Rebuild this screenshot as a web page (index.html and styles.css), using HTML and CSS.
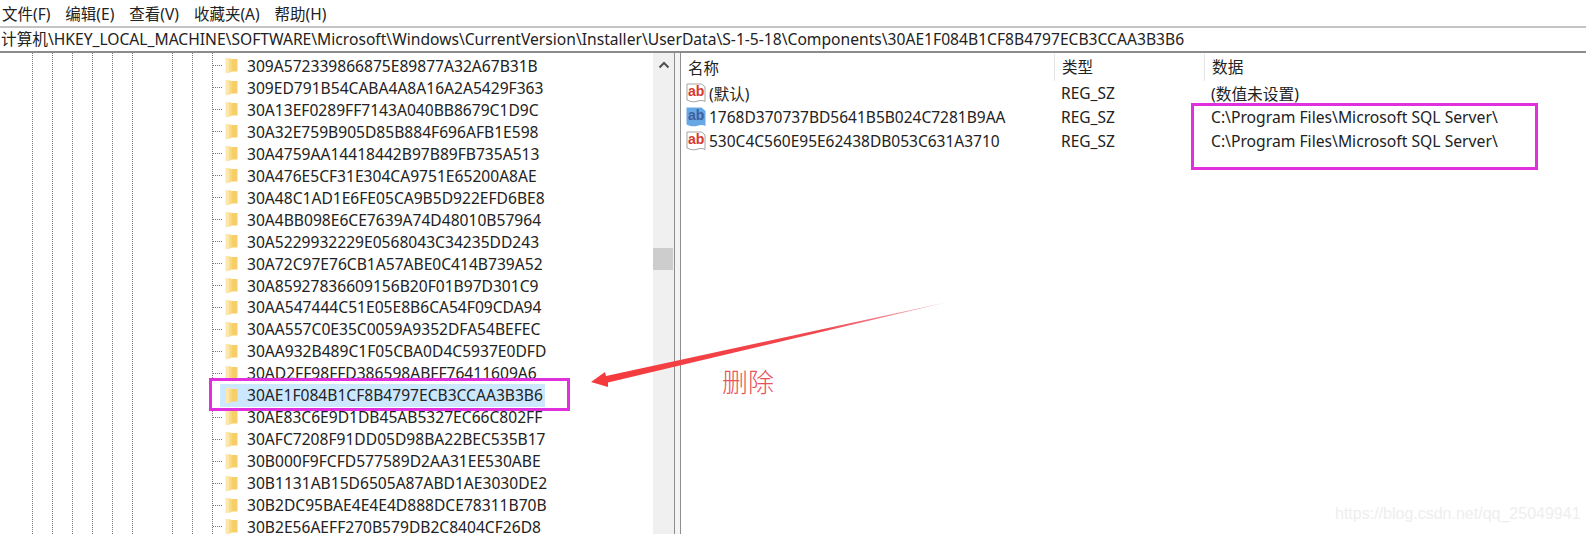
FILE: index.html
```html
<!DOCTYPE html>
<html lang="zh-CN">
<head>
  <meta charset="UTF-8" />
  <title>注册表编辑器</title>
  <link rel="stylesheet" href="styles.css">
</head>
<body>
  <!-- Icons -->
  <svg class="defs" width="0" height="0">
    <symbol id="folder" viewBox="0 0 13 17">
      <path d="M0.500 1h5.500v14l-4 1.500-1.500-1z" fill="#fce8ac"/>
      <path d="M6 2h6.500v12.500H6z" fill="#f7cf68"/>
      <path d="M4 2h2.500v13L4 15.500z" fill="#fadb84"/>
    </symbol>
    <symbol id="page-red" viewBox="0 0 20 20">
      <path d="M1 1h14.500l3.500 3v14.500c-3-1.500-5-1.200-8-.2s-6 .7-10-1.300z" fill="#fff" stroke="#a4a4a4"/>
    </symbol>
    <symbol id="page-blue" viewBox="0 0 20 20">
      <path d="M.5.500h15l4 3.500v15c-3-1.500-5-1.200-8-.2s-7 .7-11-1.300z" fill="#66a8e6"/>
    </symbol>
  </svg>

  <!-- Menu -->
  <nav class="menubar">
    <span>文件(F)</span>
    <span>编辑(E)</span>
    <span>查看(V)</span>
    <span>收藏夹(A)</span>
    <span>帮助(H)</span>
  </nav>

  <!-- Address -->
  <div class="address">计算机\HKEY_LOCAL_MACHINE\SOFTWARE\Microsoft\Windows\CurrentVersion\Installer\UserData\S-1-5-18\Components\30AE1F084B1CF8B4797ECB3CCAA3B3B6</div>

  <div class="panes">
    <!-- Tree -->
    <div class="tree">
      <div class="row"><i class="dash"></i><svg class="folder"><use href="#folder"/></svg><span class="key">309A572339866875E89877A32A67B31B</span></div>
      <div class="row"><i class="dash"></i><svg class="folder"><use href="#folder"/></svg><span class="key">309ED791B54CABA4A8A16A2A5429F363</span></div>
      <div class="row"><i class="dash"></i><svg class="folder"><use href="#folder"/></svg><span class="key">30A13EF0289FF7143A040BB8679C1D9C</span></div>
      <div class="row"><i class="dash"></i><svg class="folder"><use href="#folder"/></svg><span class="key">30A32E759B905D85B884F696AFB1E598</span></div>
      <div class="row"><i class="dash"></i><svg class="folder"><use href="#folder"/></svg><span class="key">30A4759AA14418442B97B89FB735A513</span></div>
      <div class="row"><i class="dash"></i><svg class="folder"><use href="#folder"/></svg><span class="key">30A476E5CF31E304CA9751E65200A8AE</span></div>
      <div class="row"><i class="dash"></i><svg class="folder"><use href="#folder"/></svg><span class="key">30A48C1AD1E6FE05CA9B5D922EFD6BE8</span></div>
      <div class="row"><i class="dash"></i><svg class="folder"><use href="#folder"/></svg><span class="key">30A4BB098E6CE7639A74D48010B57964</span></div>
      <div class="row"><i class="dash"></i><svg class="folder"><use href="#folder"/></svg><span class="key">30A5229932229E0568043C34235DD243</span></div>
      <div class="row"><i class="dash"></i><svg class="folder"><use href="#folder"/></svg><span class="key">30A72C97E76CB1A57ABE0C414B739A52</span></div>
      <div class="row"><i class="dash"></i><svg class="folder"><use href="#folder"/></svg><span class="key">30A85927836609156B20F01B97D301C9</span></div>
      <div class="row"><i class="dash"></i><svg class="folder"><use href="#folder"/></svg><span class="key">30AA547444C51E05E8B6CA54F09CDA94</span></div>
      <div class="row"><i class="dash"></i><svg class="folder"><use href="#folder"/></svg><span class="key">30AA557C0E35C0059A9352DFA54BEFEC</span></div>
      <div class="row"><i class="dash"></i><svg class="folder"><use href="#folder"/></svg><span class="key">30AA932B489C1F05CBA0D4C5937E0DFD</span></div>
      <div class="row"><i class="dash"></i><svg class="folder"><use href="#folder"/></svg><span class="key">30AD2FF98FFD386598ABFF76411609A6</span></div>
      <div class="row selected"><i class="dash"></i><div class="sel"><svg class="folder"><use href="#folder"/></svg><span class="key">30AE1F084B1CF8B4797ECB3CCAA3B3B6</span></div></div>
      <div class="row"><i class="dash"></i><svg class="folder"><use href="#folder"/></svg><span class="key">30AE83C6E9D1DB45AB5327EC66C802FF</span></div>
      <div class="row"><i class="dash"></i><svg class="folder"><use href="#folder"/></svg><span class="key">30AFC7208F91DD05D98BA22BEC535B17</span></div>
      <div class="row"><i class="dash"></i><svg class="folder"><use href="#folder"/></svg><span class="key">30B000F9FCFD577589D2AA31EE530ABE</span></div>
      <div class="row"><i class="dash"></i><svg class="folder"><use href="#folder"/></svg><span class="key">30B1131AB15D6505A87ABD1AE3030DE2</span></div>
      <div class="row"><i class="dash"></i><svg class="folder"><use href="#folder"/></svg><span class="key">30B2DC95BAE4E4E4D888DCE78311B70B</span></div>
      <div class="row"><i class="dash"></i><svg class="folder"><use href="#folder"/></svg><span class="key">30B2E56AEFF270B579DB2C8404CF26D8</span></div>
    </div>

    <!-- Scrollbar -->
    <div class="scrollbar">
      <svg class="chevron" width="12" height="8" viewBox="0 0 12 8"><path d="M1.500 6.500L6 2l4.500 4.500" fill="none" stroke="#505050" stroke-width="2"/></svg>
      <div class="thumb"></div>
    </div>
    <div class="splitter"></div>

    <!-- Values -->
    <div class="values">
      <div class="head">
        <div class="col-name">名称</div>
        <div class="col-type">类型</div>
        <div class="col-data">数据</div>
      </div>
      <div class="value">
        <div class="col-name"><svg class="ab" viewBox="0 0 20 20"><use href="#page-red"/><text x="2" y="13" class="ab-text ab-red">ab</text></svg>(默认)</div>
        <div class="col-type">REG_SZ</div>
        <div class="col-data">(数值未设置)</div>
      </div>
      <div class="value">
        <div class="col-name"><svg class="ab" viewBox="0 0 20 20"><use href="#page-blue"/><text x="2" y="13" class="ab-text ab-blue">ab</text></svg>1768D370737BD5641B5B024C7281B9AA</div>
        <div class="col-type">REG_SZ</div>
        <div class="col-data">C:\Program Files\Microsoft SQL Server\</div>
      </div>
      <div class="value">
        <div class="col-name"><svg class="ab" viewBox="0 0 20 20"><use href="#page-red"/><text x="2" y="13" class="ab-text ab-red">ab</text></svg>530C4C560E95E62438DB053C631A3710</div>
        <div class="col-type">REG_SZ</div>
        <div class="col-data">C:\Program Files\Microsoft SQL Server\</div>
      </div>
    </div>
  </div>

  <!-- Annotations drawn on the screenshot -->
  <div class="mark-data"></div>
  <svg class="arrow" width="1586" height="534">
    <defs>
      <linearGradient id="fade" x1="591" y1="382" x2="948" y2="302" gradientUnits="userSpaceOnUse">
        <stop offset="0" stop-color="#f5393c"/>
        <stop offset="0.65" stop-color="#f0484f"/>
        <stop offset="1" stop-color="#f6b8c8"/>
      </linearGradient>
    </defs>
    <path d="M591 382l14-10 1 4 342-74-340 80.500V387z" fill="url(#fade)"/>
  </svg>
  <div class="note">删除</div>
  <div class="watermark">https://blog.csdn.net/qq_25049941</div>
</body>
</html>
```

FILE: styles.css
```css
/* Reset */
* {
  margin: 0;
  padding: 0;
  box-sizing: border-box;
}
html, body {
  height: 534px;
  overflow: hidden;
}
body {
  position: relative;
  font-family: "Noto Sans", "Noto Sans CJK SC", sans-serif;
  font-size: 15.5px;
  color: #222;
  background-color: #fff;
}
.defs {
  position: absolute;
}
.ab-text {
  font-family: "Liberation Sans", sans-serif;
  font-size: 14px;
  font-weight: bold;
}
.ab-red {
  fill: #d6392e;
}
.ab-blue {
  fill: #3f5f9c;
}

/* Menu */
.menubar {
  display: flex;
  gap: 15px;
  height: 28px;
  padding-left: 2px;
  align-items: center;
  font-size: 15.5px;
  border-bottom: 2px solid #c4c4c4;
}

/* Address */
.address {
  height: 25px;
  line-height: 23px;
  padding-left: 1px;
  font-size: 15.63px;
  white-space: nowrap;
  border-bottom: 2px solid #8c8c8c;
}

/* Panes */
.panes {
  display: flex;
  height: 481px;
}
.tree {
  --dots: linear-gradient(#777 50%, transparent 50%);
  width: 653px;
  padding-top: 2px;
  flex-shrink: 0;
  overflow: hidden;
  font-size: 15.6px;
  background-image: var(--dots), var(--dots), var(--dots), var(--dots), var(--dots), var(--dots), var(--dots), var(--dots), var(--dots);
  background-size: 1px 2px;
  background-repeat: repeat-y;
  background-position: 32px 0, 52px 0, 72px 0, 92px 0, 112px 0, 132px 0, 172px 0, 192px 0, 212px 0;
}
.row {
  position: relative;
  display: flex;
  align-items: center;
  height: 21.96px;
  padding-left: 213px;
}
.dash {
  width: 9px;
  border-top: 1px dotted #777;
  flex-shrink: 0;
}
.folder {
  width: 13px;
  height: 17px;
  margin-left: 3px;
  flex-shrink: 0;
}
.key {
  margin-left: 9px;
  white-space: nowrap;
}

/* Selected key, with the pink box around it */
.row.selected {
  z-index: 1;
}
.row.selected::before {
  content: "";
  position: absolute;
  z-index: -1;
  box-sizing: border-box;
  left: 209px;
  width: 361px;
  top: -6px;
  height: 33px;
  background-color: #fff;
  border: 3px solid #e02fdc;
}
.row.selected .dash {
  visibility: hidden;
}
.sel {
  display: flex;
  align-items: center;
  height: 23px;
  width: 325px;
  margin-left: -2px;
  padding-left: 2px;
  background-color: #cce8ff;
}

/* Scrollbar */
.scrollbar {
  position: relative;
  width: 21px;
  flex-shrink: 0;
  background-color: #f0f0f0;
}
.chevron {
  display: block;
  margin: 8px auto 0;
}
.thumb {
  height: 22px;
  margin-top: 179px;
  margin-right: 1px;
  background-color: #cdcdcd;
}
.splitter {
  width: 7px;
  flex-shrink: 0;
  background-color: #f4f4f4;
  border-left: 1px solid #8e8e8e;
  border-right: 1px solid #8e8e8e;
}

/* Values */
.values {
  flex: 1;
}
.head, .value {
  display: flex;
  white-space: nowrap;
}
.head {
  height: 27px;
  align-items: center;
  margin-top: 1px;
}
.value {
  height: 24px;
  align-items: center;
}
.col-name {
  display: flex;
  align-items: center;
  width: 373px;
  padding-left: 7px;
}
.value .col-name {
  padding-left: 5px;
}
.col-type {
  width: 150px;
  padding-left: 7px;
}
.col-data {
  padding-left: 7px;
  font-size: 15.7px;
}
.head .col-type, .head .col-data {
  border-left: 1px solid #e5e5e5;
  line-height: 27px;
}
.ab {
  width: 20px;
  height: 20px;
  margin-right: 3px;
  flex-shrink: 0;
}

/* Annotations */
.mark-data {
  position: absolute;
  left: 1191px;
  top: 103px;
  width: 347px;
  height: 67px;
  border: 3px solid #e02fdc;
}
.arrow {
  position: absolute;
  left: 0;
  top: 0;
}
.note {
  position: absolute;
  left: 722px;
  top: 362px;
  font-family: "Noto Sans CJK SC", sans-serif;
  font-size: 26px;
  font-weight: 300;
  color: #e8525c;
}
.watermark {
  position: absolute;
  left: 1335px;
  top: 505px;
  font-family: "Liberation Sans", sans-serif;
  font-size: 16px;
  color: #eee;
  white-space: nowrap;
}
```
